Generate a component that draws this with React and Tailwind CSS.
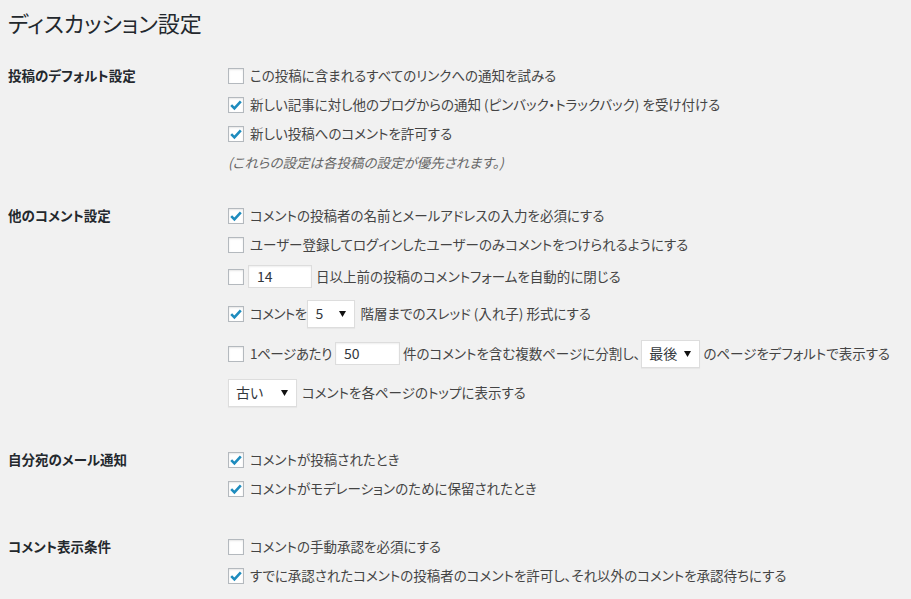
const FONT = {
  fontFamily: '"Meiryo UI", "Noto Sans CJK JP", "Noto Sans", sans-serif',
  fontFeatureSettings: '"palt"',
};

function Check({ checked }) {
  return (
    <span className="w-4 h-4 flex-shrink-0 bg-white border border-[#b4b9be] shadow-[inset_0_1px_2px_rgba(0,0,0,0.1)] flex items-center justify-center">
      {checked && (
        <svg width="14" height="14" viewBox="0 0 14 14">
          <path
            d="M2.2 7.2 L5.4 10.4 L11.8 3.4"
            fill="none"
            stroke="#1e8cbe"
            strokeWidth="2.6"
          />
        </svg>
      )}
    </span>
  );
}

function Input({ value, width }) {
  return (
    <span
      className="h-[23px] bg-white border border-[#ddd] shadow-[inset_0_1px_2px_rgba(0,0,0,0.07)] flex items-center pl-[8px] text-[#32373c] text-[14px]"
      style={{ width }}
    >
      {value}
    </span>
  );
}

function Select({ value, width }) {
  return (
    <span
      className="h-[28px] bg-white border border-[#ddd] shadow-[0_1px_1px_rgba(0,0,0,0.04)] flex items-center justify-between pl-[7px] pr-[8px] text-[#32373c] text-[14px]"
      style={{ width }}
    >
      <span>{value}</span>
      <svg width="7" height="6" viewBox="0 0 7 6">
        <path d="M0 0 L7 0 L3.5 6 Z" fill="#111" />
      </svg>
    </span>
  );
}

function Row({ h = "h-[29px]", children }) {
  return (
    <div className={`${h} flex items-center whitespace-nowrap`}>{children}</div>
  );
}

function Section({ label, className = "", children }) {
  return (
    <div className={`flex ${className}`}>
      <div className="w-[220px] flex-shrink-0 h-[29px] flex items-center text-[13.5px] font-bold text-[#23282d]">
        {label}
      </div>
      <div className="flex flex-col">{children}</div>
    </div>
  );
}

function Opt({ checked, children }) {
  return (
    <>
      <Check checked={checked} />
      <span className="ml-[6px]">{children}</span>
    </>
  );
}

export default function App() {
  return (
    <div
      className="w-[911px] h-[599px] overflow-hidden bg-[#f1f1f1] text-[#444] text-[13.5px] pl-2"
      style={FONT}
    >
      <h1 className="mt-[8px] mb-[24px] text-[22px] leading-[29px] text-[#23282d] font-normal">
        ディスカッション設定
      </h1>

      <Section label="投稿のデフォルト設定">
        <Row>
          <Opt>この投稿に含まれるすべてのリンクへの通知を試みる</Opt>
        </Row>
        <Row>
          <Opt checked>
            新しい記事に対し他のブログからの通知 (ピンバック・トラックバック) を受け付ける
          </Opt>
        </Row>
        <Row>
          <Opt checked>新しい投稿へのコメントを許可する</Opt>
        </Row>
        <Row>
          <span className="italic text-[#666]">
            (これらの設定は各投稿の設定が優先されます。)
          </span>
        </Row>
      </Section>

      <Section label="他のコメント設定" className="mt-[24px]">
        <Row>
          <Opt checked>コメントの投稿者の名前とメールアドレスの入力を必須にする</Opt>
        </Row>
        <Row>
          <Opt>ユーザー登録してログインしたユーザーのみコメントをつけられるようにする</Opt>
        </Row>
        <Row h="h-[35px]">
          <Check />
          <span className="ml-[4px] mr-[4px]">
            <Input value="14" width={64} />
          </span>
          日以上前の投稿のコメントフォームを自動的に閉じる
        </Row>
        <Row h="h-[39px]">
          <Check checked />
          <span className="ml-[6px] tracking-[-0.6px]">コメントを</span>
          <span className="ml-[1px] mr-[5px]">
            <Select value="5" width={48} />
          </span>
          階層までのスレッド (入れ子) 形式にする
        </Row>
        <Row h="h-[41px]">
          <Check />
          <span className="ml-[6px] tracking-[-0.4px]">1ページあたり</span>
          <span className="ml-[3px] mr-[3px]">
            <Input value="50" width={65} />
          </span>
          件のコメントを含む複数ページに分割し、
          <span className="ml-[1px] mr-[3px]">
            <Select value="最後" width={59} />
          </span>
          のページをデフォルトで表示する
        </Row>
        <Row h="h-[37px]">
          <span className="mr-[5px]">
            <Select value="古い" width={69} />
          </span>
          コメントを各ページのトップに表示する
        </Row>
      </Section>

      <Section label="自分宛のメール通知" className="mt-[34px]">
        <Row>
          <Opt checked>コメントが投稿されたとき</Opt>
        </Row>
        <Row>
          <Opt checked>コメントがモデレーションのために保留されたとき</Opt>
        </Row>
      </Section>

      <Section label="コメント表示条件" className="mt-[29px]">
        <Row>
          <Opt>コメントの手動承認を必須にする</Opt>
        </Row>
        <Row>
          <Opt checked>
            すでに承認されたコメントの投稿者のコメントを許可し、それ以外のコメントを承認待ちにする
          </Opt>
        </Row>
      </Section>
    </div>
  );
}
